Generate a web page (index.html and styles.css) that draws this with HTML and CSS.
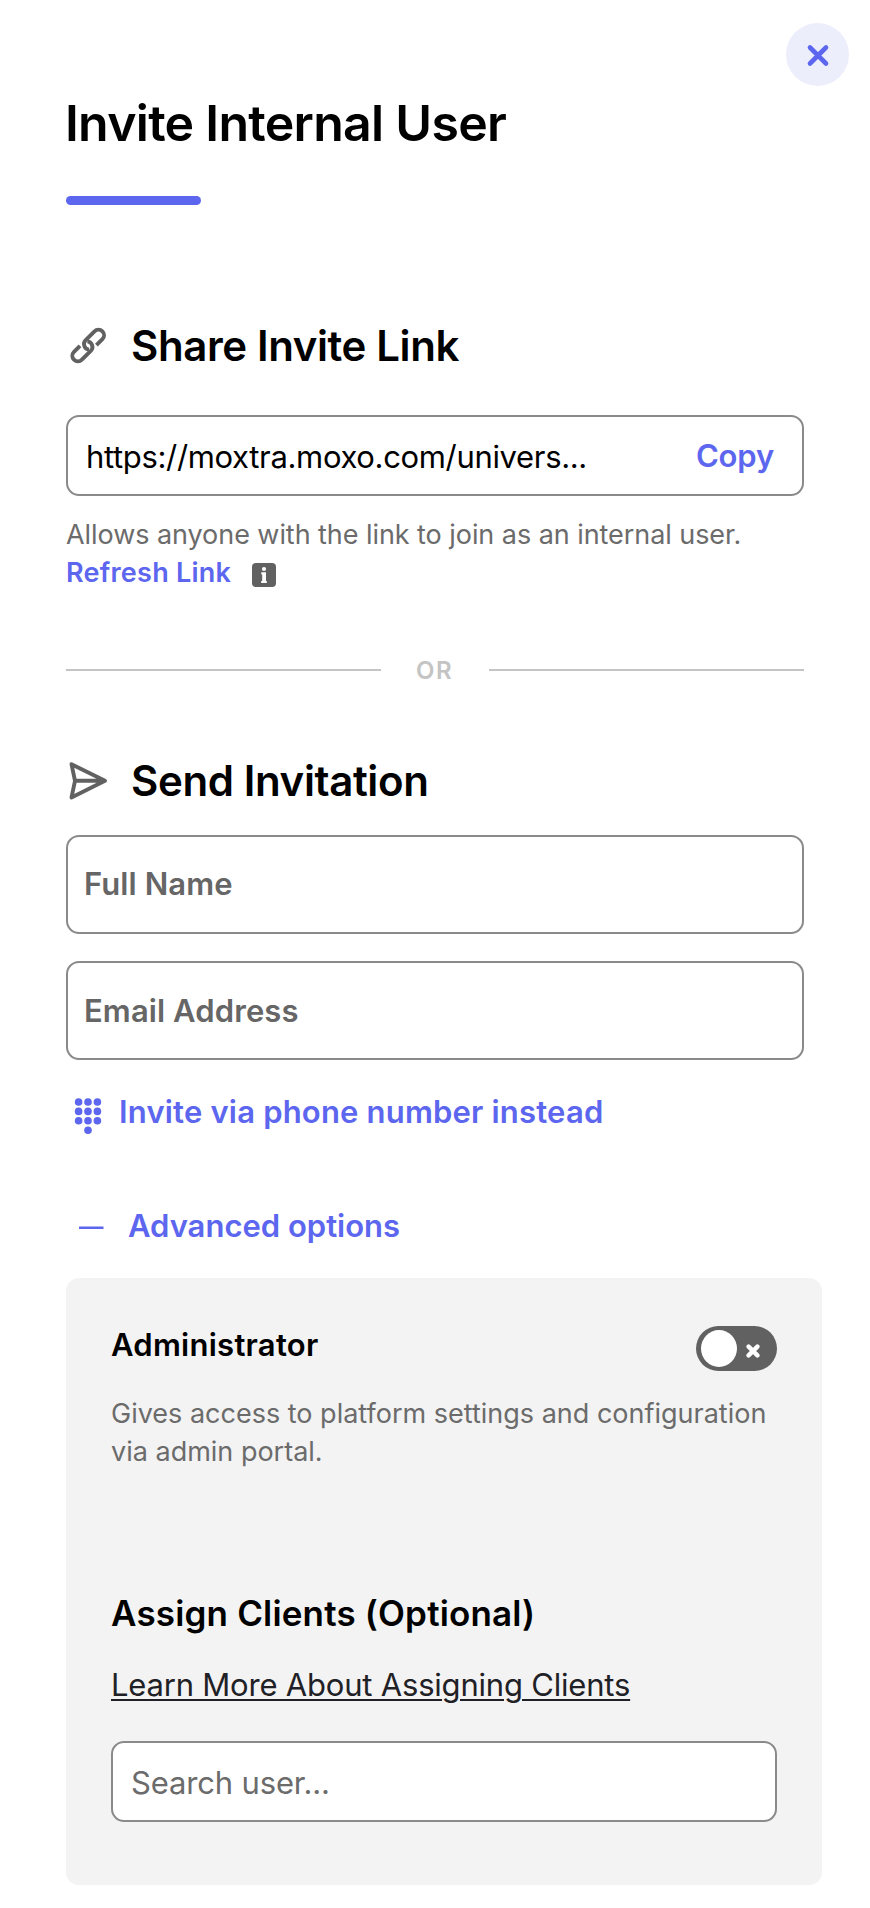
FILE: index.html
```html
<!DOCTYPE html>
<html lang="en">
<head>
    <meta charset="UTF-8">
    <meta name="viewport" content="width=device-width, initial-scale=1.0">
    <title>Invite Internal User</title>
    <link rel="stylesheet" href="styles.css">
</head>
<body>

    <div class="dialog">
        <div class="dialog-top">
            <button type="button" class="close-btn" aria-label="Close">
                <svg width="63" height="63" viewBox="0 0 63 63">
                    <path d="M24 24.5L40 40.5M40 24.5L24 40.5"/>
                </svg>
            </button>
        </div>
        <h1>Invite Internal User</h1>
        <div class="title-bar"></div>

        <h2 class="share-title">
            <svg class="heading-icon" width="45" height="45" viewBox="0 0 45 45">
                <g transform="translate(22.2 21.5) rotate(-45)">
                    <path d="M6 5.6H14.5A5.6 5.6 0 0 0 14.5 -5.6H2A5.6 5.6 0 0 0 -2.4 3.5"/>
                    <path d="M-6 -5.6H-14.5A5.6 5.6 0 0 0 -14.5 5.6H-2A5.6 5.6 0 0 0 2.4 -3.5"/>
                </g>
            </svg>
            Share Invite Link
        </h2>
        <div class="link-box">
            <span class="link-url">https://moxtra.moxo.com/univers...</span>
            <button type="button" class="copy-btn">Copy</button>
        </div>
        <p class="link-help">Allows anyone with the link to join as an internal user.</p>
        <div class="refresh-row">
            <a href="#" class="refresh-link">Refresh Link</a>
            <svg class="info-icon" width="24" height="24" viewBox="0 0 24 24">
                <rect width="24" height="24" rx="4" fill="#616161"/>
                <circle cx="12" cy="6" r="2.1" fill="#fff"/>
                <path d="M9.3 9.3h4.7v8.6h.8v2.1H9.2v-2.1h1v-6.5h-.9z" fill="#fff"/>
            </svg>
        </div>

        <div class="divider"><span>OR</span></div>

        <h2 class="send-title">
            <svg class="heading-icon" width="45" height="45" viewBox="0 0 45 45">
                <path d="M5.5 5.2L39 21.8L5.5 38.4L9 21.8ZM9 21.8H38"/>
            </svg>
            Send Invitation
        </h2>
        <form>
            <input type="text" class="field" name="name" placeholder="Full Name" aria-label="Full Name">
            <input type="email" class="field" name="email" placeholder="Email Address" aria-label="Email Address">
            <a href="#" class="phone-link">
                <svg width="44" height="44" viewBox="0 0 44 44">
                    <circle cx="12.6" cy="10" r="3.8"/>
                    <circle cx="22" cy="10" r="3.8"/>
                    <circle cx="31.4" cy="10" r="3.8"/>
                    <circle cx="12.6" cy="19.4" r="3.8"/>
                    <circle cx="22" cy="19.4" r="3.8"/>
                    <circle cx="31.4" cy="19.4" r="3.8"/>
                    <circle cx="12.6" cy="28.8" r="3.8"/>
                    <circle cx="22" cy="28.8" r="3.8"/>
                    <circle cx="31.4" cy="28.8" r="3.8"/>
                    <circle cx="22" cy="38.2" r="3.8"/>
                </svg>
                Invite via phone number instead
            </a>
            <a href="#" class="advanced-link">
                <svg width="43" height="40" viewBox="0 0 43 40">
                    <rect x="13" y="20.5" width="24.5" height="2.5"/>
                </svg>
                Advanced options
            </a>

            <div class="options">
                <div class="option-row">
                    <h3>Administrator</h3>
                    <button type="button" class="toggle" role="switch" aria-checked="false" aria-label="Administrator">
                        <span class="knob"></span>
                        <svg width="14" height="14" viewBox="0 0 14 14">
                            <path d="M2.6 2.6L11.4 11.4M11.4 2.6L2.6 11.4"/>
                        </svg>
                    </button>
                </div>
                <p class="option-text">Gives access to platform settings and configuration via admin portal.</p>
                <h3 class="assign-title">Assign Clients (Optional)</h3>
                <a href="#" class="learn-link">Learn More About Assigning Clients</a>
                <input type="text" class="search" name="search" placeholder="Search user..." aria-label="Search user">
            </div>
        </form>
    </div>

</body>
</html>
```
FILE: styles.css
```css
* {
    box-sizing: border-box;
}
body {
    font-family: Inter, "Liberation Sans", Arial, sans-serif;
    background-color: #ffffff;
    color: #000;
    margin: 0;
}
h1, h2, h3, p {
    margin: 0;
    font-weight: 600;
}
a {
    color: #5c66ee;
    text-decoration: none;
}
button, input {
    font-family: inherit;
}
.dialog {
    height: 1908px;
    padding: 23px 66px 0;
    overflow: hidden;
}
.dialog-top {
    display: flex;
    justify-content: flex-end;
    margin-right: -45px;
}
.close-btn {
    width: 63px;
    height: 63px;
    padding: 0;
    border: none;
    border-radius: 50%;
    background-color: #edeefc;
    cursor: pointer;
}
.close-btn svg {
    display: block;
    fill: none;
    stroke: #5c66ee;
    stroke-width: 4.6;
    stroke-linecap: round;
}
h1 {
    margin: 7px 0 0 -1px;
    font-size: 50px;
    line-height: 60px;
    letter-spacing: -0.72px;
}
.title-bar {
    width: 135px;
    height: 9px;
    margin-top: 43px;
    border-radius: 4.5px;
    background-color: #5c66ee;
}
h2 {
    display: flex;
    align-items: center;
    gap: 20px;
    font-size: 42px;
    line-height: 50px;
}
.share-title {
    margin-top: 116px;
    letter-spacing: -0.4px;
}
.send-title {
    margin-top: 71px;
    letter-spacing: -0.38px;
}
.heading-icon {
    fill: none;
    stroke: #616161;
    stroke-width: 3.9;
    stroke-linecap: butt;
    stroke-linejoin: round;
}
.link-box {
    display: flex;
    align-items: center;
    justify-content: space-between;
    height: 81px;
    margin-top: 44px;
    padding: 1px 28px 0 18px;
    border: 2px solid #8a8a8a;
    border-radius: 13px;
}
.link-url {
    font-size: 31px;
    letter-spacing: -0.34px;
}
.copy-btn {
    padding: 0 0 1px;
    border: none;
    background: none;
    color: #5c66ee;
    font-size: 31px;
    font-weight: 600;
    letter-spacing: -0.16px;
    cursor: pointer;
}
.link-help {
    margin-top: 20px;
    color: #6b6b6b;
    font-size: 27px;
    font-weight: 400;
    line-height: 38px;
    letter-spacing: -0.06px;
    white-space: nowrap;
}
.refresh-row {
    display: flex;
    align-items: center;
    gap: 21px;
    height: 38px;
}
.refresh-link {
    font-size: 27px;
    font-weight: 600;
    line-height: 38px;
    letter-spacing: 0.25px;
}
.info-icon {
    margin-top: 3px;
}
.divider {
    display: flex;
    align-items: center;
    gap: 35px;
    margin-top: 63px;
    color: #c4c4c4;
    font-size: 24px;
    font-weight: 600;
    line-height: 30px;
}
.divider span {
    width: 38px;
    padding-top: 1px;
    margin-bottom: -1px;
    letter-spacing: 1.5px;
}
.divider::before,
.divider::after {
    content: "";
    flex: 1;
    height: 2px;
    background-color: #c4c4c4;
}
form {
    display: flex;
    flex-direction: column;
}
.field,
.search {
    width: 100%;
    border: 2px solid #8a8a8a;
    border-radius: 13px;
    background-color: #fff;
    font-size: 31px;
    outline: none;
}
.field {
    height: 99px;
    margin-top: 27px;
    padding: 0 16px;
    font-weight: 600;
    letter-spacing: 0.1px;
}
.field:first-child {
    margin-top: 29px;
    padding-bottom: 2px;
}
.field::placeholder {
    color: #666;
}
.phone-link,
.advanced-link {
    display: flex;
    font-size: 31px;
    font-weight: 600;
    line-height: 40px;
    height: 40px;
}
.phone-link {
    gap: 9px;
    margin-top: 32px;
    letter-spacing: 0.19px;
}
.advanced-link {
    gap: 19px;
    margin-top: 74px;
}
.phone-link svg,
.advanced-link svg {
    fill: #5c66ee;
}
.options {
    width: 756px;
    height: 607px;
    margin-top: 32px;
    padding: 48px 45px 0;
    border-radius: 13px;
    background-color: #f3f3f3;
}
.option-row {
    display: flex;
    justify-content: space-between;
}
.option-row h3 {
    font-size: 31px;
    line-height: 38px;
    letter-spacing: 0.26px;
}
.toggle {
    display: flex;
    align-items: center;
    gap: 9px;
    width: 81px;
    height: 45px;
    padding: 0 5px;
    border: none;
    border-radius: 23px;
    background-color: #616161;
    cursor: pointer;
}
.toggle .knob {
    width: 36px;
    height: 37px;
    border-radius: 50%;
    background-color: #fff;
}
.toggle svg {
    margin-top: 4px;
    fill: none;
    stroke: #fff;
    stroke-width: 4.4;
    stroke-linecap: round;
}
.option-text {
    margin-top: 24px;
    color: #6b6b6b;
    font-size: 27px;
    font-weight: 400;
    line-height: 38px;
}
.assign-title {
    margin-top: 121px;
    font-size: 35px;
    line-height: 42px;
    letter-spacing: 0.17px;
}
.learn-link {
    display: block;
    margin-top: 31px;
    color: #1f2126;
    font-size: 31px;
    line-height: 40px;
    letter-spacing: -0.2px;
    text-decoration: underline;
    text-decoration-thickness: 2px;
    text-underline-offset: 3px;
}
.search {
    height: 81px;
    margin-top: 36px;
    padding: 2px 18px 0;
    letter-spacing: -0.15px;
}
.search::placeholder {
    color: #6b6b6b;
}
```
